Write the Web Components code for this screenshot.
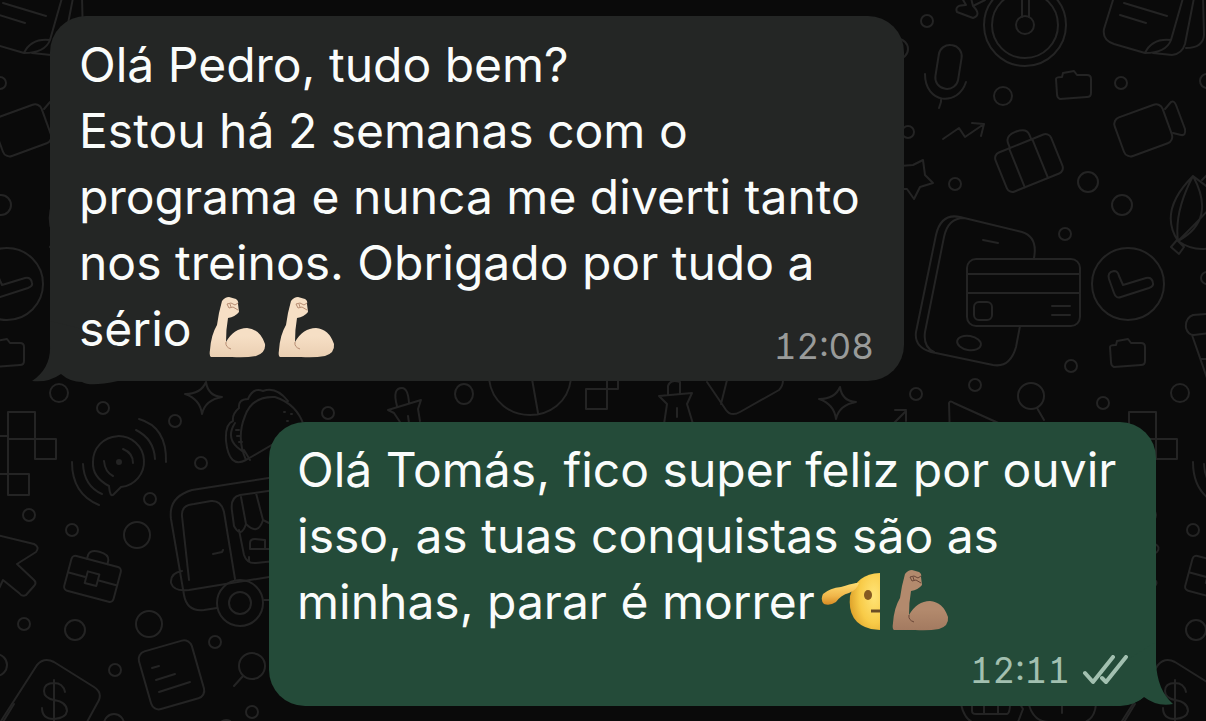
<!DOCTYPE html>
<html lang="pt">
<head>
<meta charset="utf-8">
<meta name="viewport" content="width=device-width, initial-scale=1">
<title>Conversa</title>
<style>
html, body { margin: 0; min-height: 100%; background: #0a0a0a; }
body { font-family: Inter, "Noto Sans", sans-serif; }
</style>
</head>
<body>
<chat-thread>
  <chat-bubble time="12:08">Olá Pedro, tudo bem?<br>Estou há 2 semanas com o<br>programa e nunca me diverti tanto<br>nos treinos. Obrigado por tudo a<br>sério <emoji-arm></emoji-arm><emoji-arm></emoji-arm></chat-bubble>
  <chat-bubble sent time="12:11">Olá Tomás, fico super feliz por ouvir<br>isso, as tuas conquistas são as<br>minhas, parar é morrer<emoji-salute></emoji-salute><emoji-arm tone="medium"></emoji-arm></chat-bubble>
</chat-thread>

<template id="wallpaper-template">
<style>
:host { position: absolute; inset: 0; overflow: hidden; z-index: -1; }
svg { display: block; }
</style>
<svg width="2400" height="740" fill="none" stroke="#242424" stroke-width="2" stroke-linecap="round" stroke-linejoin="round" aria-hidden="true">
<defs>
<g id="tile">
  <!-- small rings -->
  <circle cx="927" cy="21" r="6"/><circle cx="1003" cy="96" r="9"/><circle cx="1121" cy="83" r="6"/><circle cx="1207" cy="81" r="7"/><circle cx="908" cy="132" r="6"/><circle cx="955" cy="184" r="6"/><circle cx="1088" cy="182" r="10"/><circle cx="1122" cy="205" r="10"/><circle cx="898" cy="49" r="10"/>
  <circle cx="1065" cy="234" r="6"/><circle cx="1071" cy="366" r="6"/><circle cx="975" cy="385" r="6"/><circle cx="916" cy="394" r="6"/><circle cx="1103" cy="403" r="6"/><circle cx="1180" cy="393" r="9"/><circle cx="1207" cy="278" r="6"/>
  <circle cx="103" cy="408" r="6"/><circle cx="175" cy="421" r="6"/><circle cx="201" cy="463" r="6"/><circle cx="150" cy="499" r="6"/><circle cx="29" cy="515" r="6"/><circle cx="72" cy="530" r="6"/><circle cx="137" cy="535" r="13"/>
  <circle cx="24" cy="624" r="6"/><circle cx="75" cy="630" r="10"/><circle cx="149" cy="624" r="13"/><circle cx="215" cy="642" r="6"/><circle cx="115" cy="670" r="6"/><circle cx="252" cy="712" r="6"/><circle cx="114" cy="724" r="10"/><circle cx="-4" cy="665" r="11"/>
  <circle cx="328" cy="413" r="6"/><ellipse cx="464" cy="394" rx="9" ry="10"/>
  <!-- dial -->
  <circle cx="1025" cy="25" r="41"/><circle cx="1025" cy="25" r="33"/><circle cx="1025" cy="25" r="9"/><path d="M1022 0V17M1029 0V17"/>
  <path d="M962-2L966 5Q954 5 957 12L973 18Q982 15 973 6L985 0M973 6L971-2"/>
  <!-- microphone -->
  <rect x="937" y="45" width="23" height="44" rx="11" transform="rotate(9 949 67)"/><path d="M925 74C925 104 958 107 966 82M941 99V102L939 108"/>
  <!-- folders -->
  <path id="folder" d="M1056 79Q1056 77 1062 77L1063 73L1074 71L1077 75H1087Q1091 75 1091 79V93Q1091 97 1087 97L1060 99Q1057 98 1057 94Z"/><use href="#folder" x="54" y="268"/>
  <path d="M943 139L959 128L965 137L984 124M972 123L984 124L981 136"/>
  <!-- suitcase -->
  <g transform="rotate(-22 1029 163)"><rect x="999" y="142" width="60" height="42" rx="6"/><path d="M1016 142V184M1041 142V184M1017 142V137Q1017 129 1028 129Q1040 129 1040 137V142"/></g>
  <!-- camera -->
  <rect x="1118" y="110" width="51" height="41" rx="7" transform="rotate(-20 1143 131)"/><path d="M1165 109L1171 102Q1174 100 1176 105L1185 129Q1186 136 1181 135L1173 133"/>
  <!-- papers -->
  <path d="M1113 0L1104 29Q1102 40 1114 44L1145 53Q1152 38 1171 40L1183-2M1145 53Q1166 53 1171 40M1153 53L1172 55Q1182 54 1185 44L1194-2M1186 48Q1203 48 1204 35L1203-2M1124 3L1167 16M1120 15L1146 23"/>
  <!-- star -->
  <path d="M900 166L913 165L923 160L925 175L933 183L920 187L914 199L907 189L895 189"/>
  <!-- balloon -->
  <path d="M1193 176Q1158 211 1178 241Q1217 220 1193 176Q1174 212 1178 241Q1220 200 1218 195L1193 176M1178 241Q1195 253 1215 247M1171 247L1177 240L1184 247L1179 254ZM1202 180L1212 170"/>
  <!-- phone and payment card -->
  <path d="M1034 258Q1038 237 1022 232L960 217Q941 213 936 235L916 332Q914 347 931 352L993 365Q1010 368 1016 347L1020 326M964 218Q948 218 944 237L925 332Q923 347 934 352M983 240L998 243"/><rect x="967" y="259" width="113" height="67" rx="9"/><path d="M967 274H1080M967 293H1080M1052 306H1070M1052 315H1070"/><rect x="974" y="302" width="18" height="18" rx="5"/><ellipse cx="969" cy="343" rx="12" ry="7" transform="rotate(10 969 343)"/>
  <!-- clock seal -->
  <circle cx="1128" cy="284" r="36"/><path d="M1109 279Q1107 272 1114 271Q1118 271 1119 276L1123 285L1146 278Q1152 277 1153 283Q1154 286 1149 288L1121 297Q1116 299 1114 293Z"/>
  <path d="M1206 314L1193 315Q1185 318 1186 328Q1188 335 1194 335L1209 333M1192 335L1207 378M1201 359H1210"/>
  <circle cx="1031" cy="396" r="13"/><path d="M1037 408L1044 420M950 440L949 403Q950 400 954 403L1005 426"/>
  <!-- mosaic -->
  <path d="M8 412H35V439H8ZM35 439H56V459H35ZM8 439V474M8 474H29V495H8ZM-20 436H8M-20 474H8"/>
  <!-- speaking bubble -->
  <path d="M109 486Q92 477 93 462A25.500 25.500 0 1 1 121 487L113 495Q110 497 109 486ZM104 461Q105 472 113 476M123 449Q133 453 133 463M83 464Q84 486 102 494M72 462Q72 494 99 505M136 430Q154 439 155 459M139 419Q167 427 166 462"/><circle cx="119" cy="462" r="2" fill="#242424"/>
  <!-- sparkle -->
  <path id="sparkle" d="M206 382Q208 396 222 397Q205 400 202 414Q200 399 185 394Q201 394 206 382Z"/><use href="#sparkle" x="634" y="5"/>
  <!-- taco -->
  <path d="M246 460Q236 438 245 416Q252 396 275 397Q297 404 304 426L246 460Q229 469 226 441Q225 424 233 421Q232 414 239 408Q238 399 248 399Q253 387 263 391Q276 386 288 401M235 423Q226 437 237 447L242 451M236 430h3M237 436h3M239 442h3M250 460L244 450M284 412h1M291 414h1M287 421h1"/>
  <!-- bulldog clips -->
  <path d="M388 410L421 400L418 409L420 421M388 410L394 413L400 422M397 406Q392 388 402 388Q408 388 409 403M408 416L409 423"/>
  <path d="M659 396L692 393L687 404L693 424M659 396L667 404L664 424M668 394V386Q670 379 680 382V393M677 408V417"/>
  <!-- ball and squares -->
  <path d="M489 379C495 427 565 427 571 379M532 379L538 413M586 389H607V409H586ZM607 379V389H618V379"/>
  <path d="M707 382L726 410Q731 417 740 412L779 390Q783 386 783 380M721 404L727 380M894 423L906 411V421M895 410H906"/>
  <!-- shop truck -->
  <path d="M275 477L192 490Q168 497 171 519L184 595Q187 612 204 610L217 608M189 580L182 516Q181 505 194 504L211 501Q221 500 224 512L235 579M182 571Q170 573 171 583Q174 592 189 590L275 576M213 554L222 552L223 550M264 600H275M275 490L240 495Q230 497 232 511L234 526Q241 539 246 524Q258 536 263 520L275 526M241 497L246 524M256 493L263 520M239 530L244 555Q247 564 256 563L275 561M250 549V543Q250 539 255 539L265 540V548M250 549H270M249 557V561"/><circle cx="240" cy="603" r="23"/><circle cx="240" cy="603" r="11"/>
  <!-- briefcase -->
  <g transform="rotate(15 93 579)"><rect x="67" y="561" width="51" height="36" rx="4"/><path d="M67 579H85M99 579H118M82 561V557Q83 551 92 551Q102 551 103 557V561"/><rect x="86" y="573" width="12" height="12"/></g>
  <path d="M-20 531L34 544Q40 547 36 552L17 564L34 580Q37 583 34 586L26 595Q22 597 19 593L3 580L-4 595"/>
  <!-- price card -->
  <path d="M1 721L37 665Q44 657 54 662L94 687Q102 692 99 700L87 722M54 680V723M65 692Q63 683 54 683Q44 683 44 691Q44 698 54 700Q67 702 67 711Q66 718 54 719Q42 719 42 708"/>
  <!-- note -->
  <rect x="144" y="645" width="55" height="60" rx="8" transform="rotate(-16 171 675)"/><path d="M152 668L159 666M156 680L175 674M159 692L190 682"/>
  <circle cx="252" cy="666" r="13"/><path d="M243 676L234 686M219 724Q224 718 230 721"/>
  <path d="M961 704Q965 723 979 724M972 704V711Q972 714 976 714H1007Q1010 713 1010 704M984 704V713M998 704V713M1020 704L1023 709L1018 722M1029 705Q1034 722 1049 722M1062 704V713M1096 704Q1095 719 1083 723M1135 704L1124 722"/>
</g>
</defs>
<use href="#tile"/><use href="#tile" x="-1121"/><use href="#tile" x="1121"/>
</svg>
</template>

<template id="arm-template">
<style>
:host { display: inline-block; width: 57px; height: 62px; margin: 0 8px 0 4px; vertical-align: -12px; --light: #f6dfc5; --mid: #eacfb2; --line: #b78c72; }
:host([tone="medium"]) { --light: #b38a6d; --mid: #a37a60; --line: #694638; }
svg { display: block; }
</style>
<svg width="57" height="62" viewBox="0 0 57 62" role="img" aria-label="braço forte">
<defs><linearGradient id="g" x1="0" y1="0" x2="0" y2="1"><stop offset=".65" style="stop-color:var(--light)"/><stop offset="1" style="stop-color:var(--mid)"/></linearGradient></defs>
<path d="M10 17L13 5Q16 1 20 1L27 3Q30 5 29 8L30 16Q26 21 19 22Q17 33 17 46Q25 32 38 32Q51 33 56 48Q57 57 47 60Q36 62 23 61H2Q0 60 1 54Q2 39 8 29Z" fill="url(#g)"/>
<path d="M18 8L22 7L26 9L29 7M18 8L20 12L24 11L29 14M21 8L22 11M17 46Q16 51 22 53" fill="none" style="stroke:var(--line)" stroke-width="1"/>
</svg>
</template>

<template id="salute-template">
<style>
:host { display: inline-block; width: 59px; height: 58px; margin: 0 8px 0 6px; vertical-align: -11px; }
svg { display: block; }
</style>
<svg width="59" height="58" viewBox="0 0 59 58" role="img" aria-label="continência">
<defs><radialGradient id="f" cx=".8" cy=".4" r=".8"><stop offset="0" stop-color="#ffe477"/><stop offset=".6" stop-color="#f8cb48"/><stop offset="1" stop-color="#dfa42c"/></radialGradient><linearGradient id="h" x1="0" y1="0" x2="0" y2="1"><stop offset="0" stop-color="#ffdc70"/><stop offset=".6" stop-color="#f0b64a"/><stop offset="1" stop-color="#d78c24"/></linearGradient></defs>
<path d="M59 1Q35 2 29 24Q26 51 50 57L59 58Z" fill="url(#f)"/>
<path d="M38 11Q36 18 28 21Q20 23 15 30Q9 34 3 32Q-1 28 2 22Q9 16 20 15Q29 12 35 11Z" fill="url(#h)"/>
<ellipse cx="47" cy="23" rx="4" ry="5" fill="#855a22"/><path d="M50 39H59" stroke="#6a4c26" stroke-width="3"/>
</svg>
</template>

<script>
const stamp = (host, html) => {
  const root = host.attachShadow({ mode: 'open' });
  if (html instanceof HTMLTemplateElement) root.append(html.content.cloneNode(true));
  else root.innerHTML = html;
  return root;
};

customElements.define('chat-wallpaper', class extends HTMLElement {
  constructor() { super(); stamp(this, document.getElementById('wallpaper-template')); }
});
customElements.define('emoji-arm', class extends HTMLElement {
  constructor() { super(); stamp(this, document.getElementById('arm-template')); }
});
customElements.define('emoji-salute', class extends HTMLElement {
  constructor() { super(); stamp(this, document.getElementById('salute-template')); }
});

customElements.define('chat-bubble', class extends HTMLElement {
  connectedCallback() {
    if (this.shadowRoot) return;
    const sent = this.hasAttribute('sent');
    stamp(this, `<style>
:host { --fill: #242625; position: relative; isolation: isolate; display: grid; box-sizing: border-box; width: 854px; max-width: 100%; padding: 16px 30px 19px 29px; border-radius: 36px; background: var(--fill); color: #fafcfb; font-size: 48px; line-height: 66px; }
:host([sent]) { --fill: #244b39; width: 887px; align-self: flex-end; padding: 15px 28px 14px; }
p { margin: 0; grid-area: 1 / 1; white-space: nowrap; }
footer { grid-area: 1 / 1; place-self: end; display: flex; align-items: center; gap: 12px; color: #999b9a; font-size: 35px; line-height: 32px; font-feature-settings: "tnum", "cv01"; }
:host([sent]) footer { grid-area: 2 / 1; color: #a2c0b0; line-height: 44px; margin-top: 13px; }
.tail { position: absolute; z-index: -1; left: -18px; bottom: -4px; fill: var(--fill); }
:host([sent]) .tail { left: auto; right: -17px; bottom: 0; }
</style>
<svg class="tail" width="${sent ? 66 : 100}" height="64" aria-hidden="true"><path d="${sent
  ? 'M49 0V20Q50 48 66 62Q50 65 37 55Q27 64 0 64V30Z'
  : 'M18 0V25Q19 47 0 60Q16 62 29 53Q38 61 50 61Q58 66 86 60H100V20Z'}"/></svg>
<p><slot></slot></p>
<footer><time>${this.getAttribute('time')}</time>${sent ? `<svg width="46" height="30" fill="none" stroke="currentColor" stroke-width="4" stroke-linecap="round" stroke-linejoin="round" role="img" aria-label="entregue"><path d="M3 18L11 27L31 2M20 23L24 27L44 2"/></svg>` : ''}</footer>`);
  }
});

customElements.define('chat-thread', class extends HTMLElement {
  constructor() {
    super();
    stamp(this, `<style>
:host { position: relative; z-index: 0; display: block; box-sizing: border-box; min-height: 100vh; }
main { display: flex; flex-direction: column; align-items: flex-start; gap: 41px; padding: 16px 50px 15px; }
</style><chat-wallpaper></chat-wallpaper><main><slot></slot></main>`);
  }
});
</script>
</body>
</html>
